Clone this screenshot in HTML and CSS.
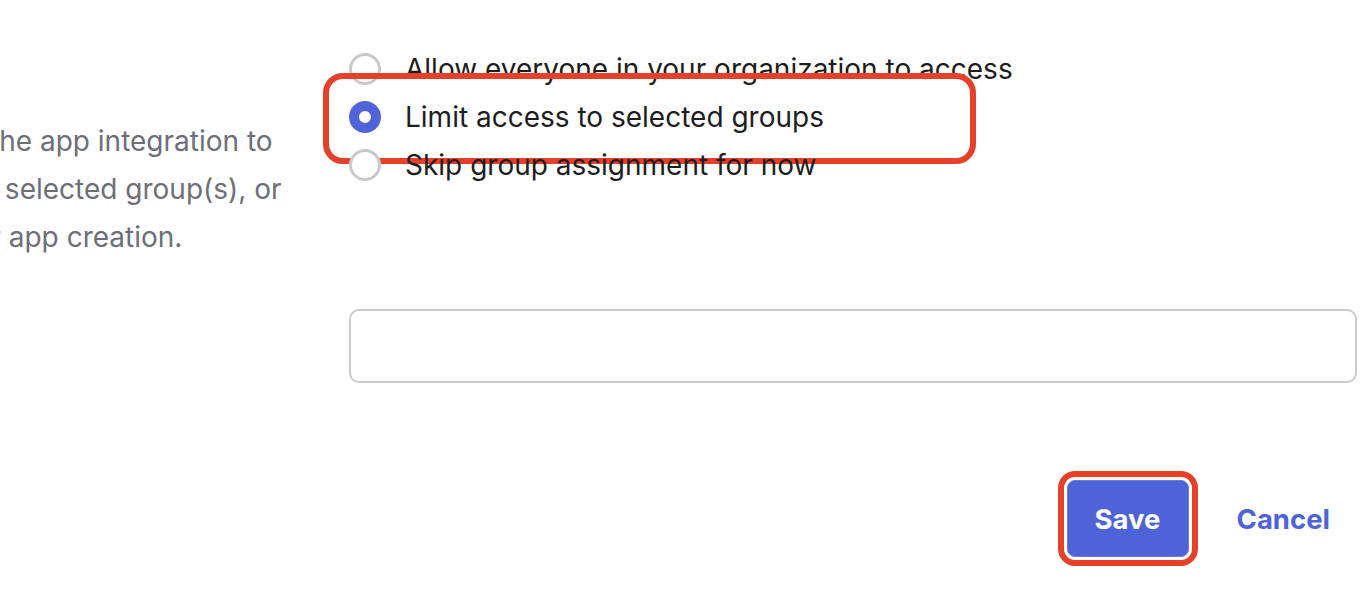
FILE: index.html
```html
<!DOCTYPE html>
<html lang="en">
<head>
<meta charset="utf-8">
<title>Assignment controls</title>
<link rel="stylesheet" href="styles.css">
</head>
<body>
<div class="page">
  <div class="desc">
    <div class="desc-line shift-1">the app integration to</div>
    <div class="desc-line shift-2">only selected group(s), or</div>
    <div class="desc-line shift-3">after app creation.</div>
  </div>
  <div class="form">
    <div class="radios">
      <label class="radio-row">
        <span class="radio"></span>
        <span class="radio-label">Allow everyone in your organization to access</span>
      </label>
      <label class="radio-row selected-row">
        <span class="radio radio-checked"></span>
        <span class="radio-label">Limit access to selected groups</span>
        <span class="highlight"></span>
      </label>
      <label class="radio-row">
        <span class="radio"></span>
        <span class="radio-label">Skip group assignment for now</span>
      </label>
    </div>
    <div class="text-input"></div>
    <div class="actions">
      <button class="save" type="button">Save</button>
      <a class="cancel" href="#">Cancel</a>
    </div>
  </div>
</div>
</body>
</html>
```
FILE: styles.css
```css
* { box-sizing: border-box; }
html, body {
  margin: 0;
  padding: 0;
  background: #ffffff;
}
body {
  width: 1372px;
  height: 596px;
  overflow: hidden;
  font-family: Inter, "Noto Sans", "Liberation Sans", sans-serif;
  font-size: 28px;
  color: #1d1d21;
}
.page {
  display: flex;
  height: 596px;
}
.desc {
  width: 349px;
  flex: none;
  overflow: hidden;
  padding-top: 117px;
  color: #6e6e78;
}
.desc-line {
  height: 48px;
  line-height: 48px;
  white-space: nowrap;
}
.shift-1 { margin-left: -10px; }
.shift-2 { margin-left: -59px; }
.shift-3 { margin-left: -60px; }

.form {
  flex: 1;
  padding-top: 45px;
  padding-right: 15px;
  display: flex;
  flex-direction: column;
}
.radios {
  display: flex;
  flex-direction: column;
}
.radio-row {
  position: relative;
  display: flex;
  align-items: center;
  height: 48px;
  gap: 24px;
}
.radio {
  width: 32px;
  height: 32px;
  flex: none;
  border-radius: 50%;
  border: 3px solid #c9c9cc;
  background: #fff;
}
.radio-checked {
  border: 10px solid #5063d9;
  background: #fff;
}
.radio-label {
  white-space: nowrap;
  line-height: 48px;
}
.highlight {
  position: absolute;
  left: -26px;
  top: -20px;
  width: 653px;
  height: 91px;
  border: 6px solid #e5402a;
  border-radius: 20px;
  pointer-events: none;
}
.text-input {
  margin-top: 120px;
  height: 74px;
  border: 2px solid #cbcbcd;
  border-radius: 10px;
}
.actions {
  margin-top: 97px;
  display: flex;
  align-items: center;
  justify-content: flex-end;
  padding-right: 27px;
  gap: 48px;
}
.save {
  width: 122px;
  height: 77px;
  flex: none;
  padding: 0;
  border: 1px solid #6b7be0;
  border-radius: 8px;
  background: #4f63d9;
  color: #ffffff;
  font-family: inherit;
  font-size: 27.5px;
  font-weight: 700;
  box-shadow: 0 0 0 3px #ffffff, 0 0 0 9px #e5402a;
  cursor: pointer;
}
.cancel {
  color: #4f63d9;
  font-size: 27.5px;
  font-weight: 700;
  text-decoration: none;
}
```
